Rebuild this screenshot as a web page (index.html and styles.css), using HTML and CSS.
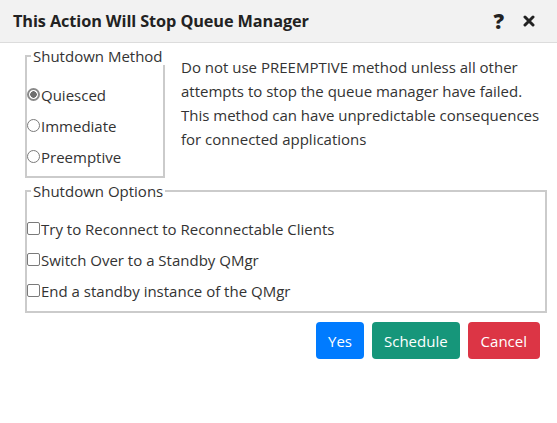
FILE: index.html
```html
<!DOCTYPE html>
<html lang="en">
<head>
<meta charset="utf-8">
<title>Stop Queue Manager</title>
<link rel="stylesheet" href="styles.css">
</head>
<body>
<div class="dialog">
  <header class="dialog-header">
    <h1 class="dialog-title">This Action Will Stop Queue Manager</h1>
    <div class="header-actions">
      <span class="help-icon">?</span>
      <svg class="close-icon" width="12" height="12" viewBox="0 0 12 12" aria-hidden="true">
        <path d="M2 2 L10 10 M10 2 L2 10" stroke="#222" stroke-width="3" stroke-linecap="round"/>
      </svg>
    </div>
  </header>

  <div class="dialog-body">
    <div class="method-row">
      <fieldset class="group method-group">
        <legend>Shutdown Method</legend>
        <label class="choice"><input type="radio" name="method" checked><span>Quiesced</span></label>
        <label class="choice"><input type="radio" name="method"><span>Immediate</span></label>
        <label class="choice"><input type="radio" name="method"><span>Preemptive</span></label>
      </fieldset>
      <p class="warning">Do not use PREEMPTIVE method unless all other attempts to stop the queue manager have failed.<br>This method can have unpredictable consequences for connected applications</p>
    </div>

    <fieldset class="group options-group">
      <legend>Shutdown Options</legend>
      <label class="choice"><input type="checkbox"><span>Try to Reconnect to Reconnectable Clients</span></label>
      <label class="choice"><input type="checkbox"><span>Switch Over to a Standby QMgr</span></label>
      <label class="choice"><input type="checkbox"><span>End a standby instance of the QMgr</span></label>
    </fieldset>

    <div class="actions">
      <button class="btn btn-primary" type="button">Yes</button>
      <button class="btn btn-success" type="button">Schedule</button>
      <button class="btn btn-danger" type="button">Cancel</button>
    </div>
  </div>
</div>
</body>
</html>
```

FILE: styles.css
```css
* {
  box-sizing: border-box;
}

body {
  margin: 0;
  background: #fff;
  color: #333;
  font-family: "Open Sans", "Noto Sans", sans-serif;
  font-size: 15px;
}

/* header bar */
.dialog-header {
  height: 43px;
  display: flex;
  align-items: center;
  justify-content: space-between;
  padding: 0 22px 0 13px;
  background: #f2f2f2;
  border-bottom: 1px solid #dcdcdc;
}

.dialog-title {
  margin: 0;
  font-size: 16.3px;
  font-weight: 700;
  color: #222;
  letter-spacing: -0.1px;
}

.header-actions {
  display: flex;
  align-items: center;
  gap: 19px;
}

.help-icon {
  font-size: 21px;
  font-weight: 800;
  line-height: 1;
  color: #222;
}

.close-icon {
  display: block;
}

/* body */
.dialog-body {
  padding: 4px 10px 0 25px;
}

.method-row {
  display: flex;
  align-items: flex-start;
  gap: 16px;
}

.group {
  margin: 0;
  padding: 0;
  border: 2px solid #cbcbcb;
  min-width: 0;
}

.group legend {
  margin-left: 4px;
  padding: 0 2px;
  line-height: 18px;
  white-space: nowrap;
}

.method-group {
  width: 140px;
  flex: none;
  padding: 14px 0 4px;
}

.options-group {
  margin-top: 4px;
  padding: 13px 0 5px;
}

.choice {
  display: flex;
  align-items: center;
  height: 31px;
}

.choice input {
  appearance: none;
  -webkit-appearance: none;
  flex: none;
  width: 13px;
  height: 13px;
  margin: 0 1px 0 0;
  border: 1px solid #7a7a7a;
  background: #fff;
}

.choice input[type="radio"] {
  border-radius: 50%;
}

.choice input[type="radio"]:checked {
  border: 2px solid #8a8a8a;
  background: radial-gradient(circle, #6e6e6e 0 3px, #fff 3.5px);
}

.choice input[type="checkbox"] {
  border-radius: 2px;
}

.warning {
  margin: 8px 0 0;
  line-height: 24px;
  flex: 1;
}

/* buttons */
.actions {
  display: flex;
  justify-content: flex-end;
  gap: 8px;
  margin-top: 9px;
  padding-right: 7px;
}

.btn {
  height: 37px;
  padding: 0 12px;
  border: 0;
  border-radius: 4px;
  color: #fff;
  font-family: inherit;
  font-size: 15px;
}

.btn-primary {
  background: #007bff;
}

.btn-success {
  background: #16967a;
}

.btn-danger {
  background: #dc3545;
  padding: 0 13px;
}
```
